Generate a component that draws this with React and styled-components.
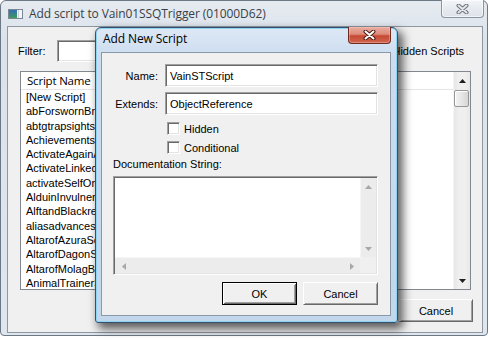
import React from "react";
import styled, { createGlobalStyle } from "styled-components";

const GlobalStyle = createGlobalStyle`
  html, body {
    margin: 0;
    padding: 0;
    background: #ffffff;
  }
  body {
    width: 490px;
    height: 340px;
    overflow: hidden;
    font-family: "Liberation Sans", Arial, sans-serif;
    font-size: 11px;
    color: #000;
  }
`;

// only the left part of each name shows beside the dialog
const scripts = [
  "[New Script]",
  "abForswornBriar",
  "abtgtrapsightsS",
  "AchievementsSc",
  "ActivateAgainAf",
  "ActivateLinkedC",
  "activateSelfOnD",
  "AlduinInvulnera",
  "AlftandBlackrea",
  "aliasadvancesta",
  "AltarofAzuraScr",
  "AltarofDagonSc",
  "AltarofMolagBal",
  "AnimalTrainerSc",
];

const CloseGlyph = ({ active }) => (
  <svg width="13" height="10" viewBox="0 0 13 10">
    <path
      d="M2.5 1.5 L10.5 8.5 M10.5 1.5 L2.5 8.5"
      stroke={active ? "#4a1a12" : "#6c737c"}
      strokeWidth="4"
      strokeLinecap="round"
      fill="none"
    />
    <path
      d="M2.5 1.5 L10.5 8.5 M10.5 1.5 L2.5 8.5"
      stroke={active ? "#ffffff" : "#e4e8ec"}
      strokeWidth="2"
      strokeLinecap="round"
      fill="none"
    />
  </svg>
);

const AppIcon = () => (
  <svg width="15" height="10" viewBox="0 0 15 10">
    <defs>
      <linearGradient id="appg" x1="0" y1="0" x2="0" y2="1">
        <stop offset="0" stopColor="#2f6fb8" />
        <stop offset="1" stopColor="#3f9a5a" />
      </linearGradient>
    </defs>
    <rect x="0.5" y="0.5" width="14" height="9" fill="#f4f6f8" stroke="#7b8794" />
    <rect x="1" y="1" width="8" height="8" fill="url(#appg)" />
    <rect x="10" y="1" width="1" height="8" fill="#c9d0d8" />
  </svg>
);

const Arrow = ({ dir, color }) => {
  const pts = {
    up: "0,4 3.5,0 7,4",
    down: "0,0 3.5,4 7,0",
    left: "4,0 0,3.5 4,7",
    right: "0,0 4,3.5 0,7",
  }[dir];
  const vertical = dir === "up" || dir === "down";
  return (
    <svg width={vertical ? 7 : 4} height={vertical ? 4 : 7}>
      <polygon points={pts} fill={color} />
    </svg>
  );
};

const Desktop = styled.div`
  position: relative;
  width: 490px;
  height: 340px;
`;

const Window = styled.div`
  box-sizing: border-box;
  width: 488px;
  height: 336px;
  border: 1px solid #6d7886;
  border-radius: 6px 6px 4px 4px;
  background: linear-gradient(#e6ebf1, #dbe2ea 40px, #e0e6ed);
  display: flex;
  flex-direction: column;
`;

const TitleBar = styled.div`
  height: 25px;
  display: flex;
  align-items: center;
  padding-left: 7px;
  flex-shrink: 0;
`;

const Title = styled.div`
  flex: 1;
  margin-left: 6px;
  margin-top: ${(p) => (p.$active ? "-3px" : "0")};
  font-family: "Open Sans", "Noto Sans", sans-serif;
  font-size: 12px;
  color: ${(p) => (p.$active ? "#000" : "#3a3f45")};
  white-space: nowrap;
  letter-spacing: -0.1px;
`;

const CloseButton = styled.div`
  box-sizing: border-box;
  align-self: flex-start;
  margin-top: -1px;
  margin-right: ${(p) => (p.$active ? "6px" : "3px")};
  width: 43px;
  height: ${(p) => (p.$active ? "17px" : "18px")};
  border: 1px solid ${(p) => (p.$active ? "#6e2a1f" : "#8b95a1")};
  border-top: none;
  border-radius: 0 0 4px 4px;
  display: flex;
  align-items: center;
  justify-content: center;
  background: ${(p) =>
    p.$active
      ? "linear-gradient(#e9aea2 0%, #dc8b7a 45%, #c64a33 55%, #d0654f 100%)"
      : "linear-gradient(#f3f5f8 0%, #e7ebf0 50%, #dde3ea 100%)"};
  box-shadow: inset 0 0 0 1px ${(p) => (p.$active ? "rgba(255,200,190,0.4)" : "rgba(255,255,255,0.6)")};
`;

const Client = styled.div`
  flex: 1;
  margin: 0 4px 2px 6px;
  border: 1px solid #8e97a2;
  background: #f0f0f0;
  display: flex;
  flex-direction: column;
`;

const FilterRow = styled.div`
  display: flex;
  align-items: center;
  height: 22px;
  margin-top: 13px;
  padding: 0 18px 0 10px;
`;

const Label = styled.span`
  white-space: nowrap;
  width: ${(p) => p.$width || "auto"};
  text-align: ${(p) => p.$align || "left"};
`;

const Edit = styled.div`
  box-sizing: border-box;
  width: ${(p) => p.$width || "auto"};
  height: ${(p) => p.$height || "22px"};
  background: #fff;
  border-top: 1px solid #a0a0a0;
  border-left: 1px solid #a0a0a0;
  border-bottom: 1px solid #fff;
  border-right: 1px solid #fff;
  box-shadow: inset 1px 1px #696969, inset -1px -1px #e3e3e3;
  padding: 0 4px;
  display: flex;
  align-items: center;
  white-space: nowrap;
`;

const Spacer = styled.div`
  flex: 1;
`;

const Check = styled.span`
  box-sizing: border-box;
  width: 13px;
  height: 13px;
  background: #fff;
  border-top: 1px solid #a0a0a0;
  border-left: 1px solid #a0a0a0;
  border-bottom: 1px solid #fff;
  border-right: 1px solid #fff;
  box-shadow: inset 1px 1px #696969, inset -1px -1px #e3e3e3;
  flex-shrink: 0;
`;

const CheckRow = styled.label`
  display: flex;
  align-items: center;
  gap: 4px;
  height: 13px;
  margin-left: ${(p) => p.$indent || "0"};
`;

const List = styled.div`
  box-sizing: border-box;
  height: 219px;
  margin: 9px 11px 0 12px;
  border: 1px solid #828790;
  background: #fff;
  display: grid;
  grid-template-columns: 1fr 17px;
`;

const ListBody = styled.div`
  overflow: hidden;
`;

const Header = styled.div`
  height: 17px;
  border-bottom: 1px solid #e5e5e5;
  padding-left: 6px;
  display: flex;
  align-items: center;
  font-family: "Open Sans", "Noto Sans", sans-serif;
  font-size: 11.5px;
  letter-spacing: -0.2px;
`;

const Item = styled.div`
  height: 14.3px;
  line-height: 14.3px;
  padding-left: 5px;
  white-space: nowrap;
`;

const VScroll = styled.div`
  display: flex;
  flex-direction: column;
  background: linear-gradient(90deg, #e6e6e6, #efefef 30%, #efefef 70%, #e8e8e8);
  border-left: 1px solid #f5f5f5;
`;

const ScrollArrow = styled.div`
  height: 17px;
  width: ${(p) => (p.$h ? "17px" : "auto")};
  display: flex;
  align-items: center;
  justify-content: center;
  flex-shrink: 0;
`;

const Thumb = styled.div`
  height: 15px;
  margin: 1px 1px 0 0;
  border: 1px solid #979797;
  border-radius: 2px;
  background: linear-gradient(90deg, #f4f4f4, #e6e6e6 50%, #d6d6d6);
  box-shadow: inset 1px 1px #fff;
`;

const Track = styled.div`
  flex: 1;
`;

const ButtonRow = styled.div`
  display: flex;
  justify-content: flex-end;
  gap: ${(p) => p.$gap || "7px"};
  margin-top: ${(p) => p.$top || "9px"};
  padding-right: ${(p) => p.$right || "9px"};
`;

const Button = styled.div`
  box-sizing: border-box;
  width: ${(p) => p.$width || "74px"};
  height: 23px;
  background: #f0f0f0;
  display: flex;
  align-items: center;
  justify-content: center;
  border: 1px solid ${(p) => (p.$default ? "#000" : "transparent")};
  ${(p) =>
    p.$default
      ? "box-shadow: inset 1px 1px #fff, inset -1px -1px #696969, inset 2px 2px #f0f0f0, inset -2px -2px #a0a0a0;"
      : "border-color: #fff #696969 #696969 #fff; box-shadow: inset 1px 1px #f0f0f0, inset -1px -1px #a0a0a0;"}
`;

const Dialog = styled.div`
  position: absolute;
  left: 95px;
  top: 27px;
  box-sizing: border-box;
  width: 303px;
  height: 296px;
  border: 1px solid #34506f;
  border-radius: 6px 6px 3px 3px;
  background: linear-gradient(#dde8f5, #cbdcef 30px, #c2d6ec);
  box-shadow: inset 0 0 0 1px #8fd3f2, 4px 5px 10px 1px rgba(0, 0, 0, 0.62);
  display: flex;
  flex-direction: column;
`;

const DialogTitleBar = styled(TitleBar)`
  height: 24px;
  padding-left: 1px;
`;

const DialogClient = styled.div`
  flex: 1;
  margin: 0 6px 6px 5px;
  border: 1px solid #8a98a8;
  background: #f0f0f0;
  padding: 11px 12px 0 11px;
  display: flex;
  flex-direction: column;
`;

const FieldGrid = styled.div`
  display: grid;
  grid-template-columns: 45px 1fr;
  column-gap: 7px;
  row-gap: 5px;
  align-items: center;
`;

const Checks = styled.div`
  display: flex;
  flex-direction: column;
  gap: 6px;
  margin-top: 7px;
`;

const DocLabel = styled.div`
  margin-top: 4px;
  height: 13px;
  line-height: 13px;
`;

const DocBox = styled.div`
  box-sizing: border-box;
  margin-top: 5px;
  height: 99px;
  background: #fff;
  border-top: 1px solid #a0a0a0;
  border-left: 1px solid #a0a0a0;
  border-bottom: 1px solid #fff;
  border-right: 1px solid #fff;
  box-shadow: inset 1px 1px #696969, inset -1px -1px #e3e3e3;
  padding: 1px;
  display: grid;
  grid-template-columns: 1fr 16px;
  grid-template-rows: 1fr 16px;
`;

const DocText = styled.div`
  background: #fff;
`;

const DocVScroll = styled.div`
  display: flex;
  flex-direction: column;
  background: #ececec;
  border-left: 1px solid #f6f6f6;
`;

const DocHScroll = styled.div`
  display: flex;
  background: #ececec;
  border-top: 1px solid #f6f6f6;
`;

const Corner = styled.div`
  background: #f0f0f0;
`;

export default function App() {
  return (
    <Desktop>
      <GlobalStyle />
      <Window>
        <TitleBar>
          <AppIcon />
          <Title>Add script to Vain01SSQTrigger (01000D62)</Title>
          <CloseButton>
            <CloseGlyph />
          </CloseButton>
        </TitleBar>
        <Client>
          <FilterRow>
            <Label $width="39px">Filter:</Label>
            <Edit $width="200px" $height="22px" />
            <Spacer />
            <CheckRow>
              <Check />
              <span>Hidden Scripts</span>
            </CheckRow>
          </FilterRow>
          <List>
            <ListBody>
              <Header>Script Name</Header>
              {scripts.map((s) => (
                <Item key={s}>{s}</Item>
              ))}
            </ListBody>
            <VScroll>
              <ScrollArrow>
                <Arrow dir="up" color="#1f1f1f" />
              </ScrollArrow>
              <Thumb />
              <Track />
              <ScrollArrow>
                <Arrow dir="down" color="#1f1f1f" />
              </ScrollArrow>
            </VScroll>
          </List>
          <ButtonRow>
            <Button $default>OK</Button>
            <Button>Cancel</Button>
          </ButtonRow>
        </Client>
      </Window>

      <Dialog>
        <DialogTitleBar>
          <Title $active>Add New Script</Title>
          <CloseButton $active>
            <CloseGlyph active />
          </CloseButton>
        </DialogTitleBar>
        <DialogClient>
          <FieldGrid>
            <Label $align="right">Name:</Label>
            <Edit $height="23px">VainSTScript</Edit>
            <Label $align="right">Extends:</Label>
            <Edit $height="23px">ObjectReference</Edit>
          </FieldGrid>
          <Checks>
            <CheckRow $indent="54px">
              <Check />
              <span>Hidden</span>
            </CheckRow>
            <CheckRow $indent="54px">
              <Check />
              <span>Conditional</span>
            </CheckRow>
          </Checks>
          <DocLabel>Documentation String:</DocLabel>
          <DocBox>
            <DocText />
            <DocVScroll>
              <ScrollArrow>
                <Arrow dir="up" color="#a8a8a8" />
              </ScrollArrow>
              <Track />
              <ScrollArrow>
                <Arrow dir="down" color="#a8a8a8" />
              </ScrollArrow>
            </DocVScroll>
            <DocHScroll>
              <ScrollArrow $h>
                <Arrow dir="left" color="#a8a8a8" />
              </ScrollArrow>
              <Track />
              <ScrollArrow $h>
                <Arrow dir="right" color="#a8a8a8" />
              </ScrollArrow>
            </DocHScroll>
            <Corner />
          </DocBox>
          <ButtonRow $top="7px" $right="0" $gap="6px">
            <Button $default $width="75px">OK</Button>
            <Button $width="75px">Cancel</Button>
          </ButtonRow>
        </DialogClient>
      </Dialog>
    </Desktop>
  );
}
